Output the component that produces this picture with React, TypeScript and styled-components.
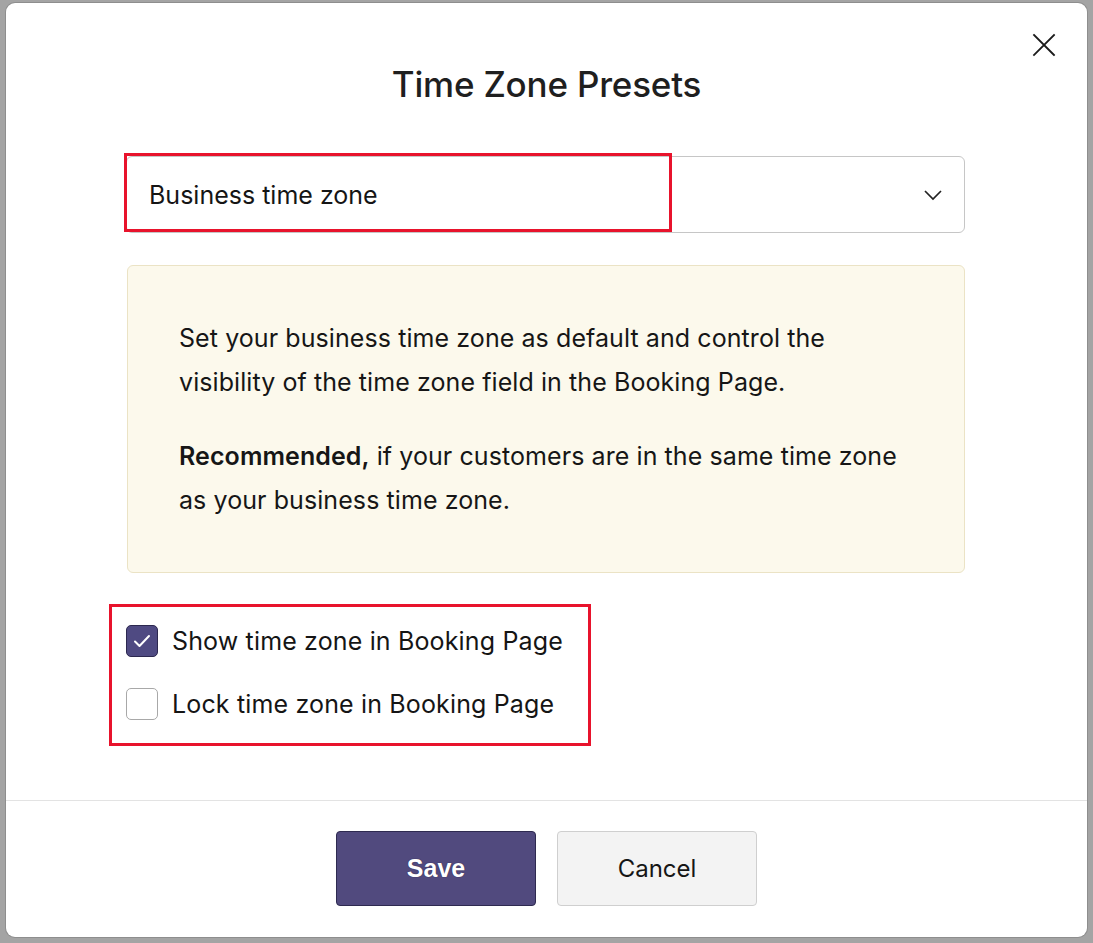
import React, { useState } from "react";
import styled, { createGlobalStyle } from "styled-components";

const Global = createGlobalStyle`
  html, body { margin: 0; padding: 0; }
  body {
    background: #a4a4a4;
    font-family: Inter, "Noto Sans", "Liberation Sans", sans-serif;
    color: #1a1a1a;
  }
  * { box-sizing: border-box; }
`;

const Backdrop = styled.div`
  width: 1093px;
  height: 943px;
  padding: 3px 6px 6px 6px;
  background: #a4a4a4;
  overflow: hidden;
`;

const Modal = styled.div`
  position: relative;
  width: 1081px;
  height: 934px;
  background: #ffffff;
  border-radius: 9px;
  display: flex;
  flex-direction: column;
  box-shadow: 0 0 0 1px #8e8e8e;
`;

const CloseButton = styled.button`
  position: absolute;
  top: 26px;
  right: 27px;
  width: 32px;
  height: 32px;
  border: none;
  background: transparent;
  padding: 0;
  display: flex;
  align-items: center;
  justify-content: center;
  cursor: pointer;
`;

const Title = styled.h1`
  margin: 61px 0 0 0;
  text-align: center;
  font-size: 35px;
  line-height: 40px;
  font-weight: 500;
  color: #1f1f1f;
  letter-spacing: -0.2px;
`;

const Body = styled.div`
  display: flex;
  flex-direction: column;
  padding: 52px 122px 0 120px;
`;

const SelectWrap = styled.div`
  position: relative;
`;

const Select = styled.div`
  height: 77px;
  border: 1px solid #c6c6c6;
  border-radius: 6px;
  display: flex;
  align-items: center;
  justify-content: space-between;
  padding: 0 22px 0 22px;
  font-size: 25px;
  color: #151515;
`;

const Highlight = styled.div<{ $left: number; $top: number; $w: number; $h: number }>`
  position: absolute;
  left: ${(p) => p.$left}px;
  top: ${(p) => p.$top}px;
  width: ${(p) => p.$w}px;
  height: ${(p) => p.$h}px;
  border: 3px solid #e8132c;
  pointer-events: none;
`;

const InfoBox = styled.div`
  margin-top: 32px;
  margin-left: 1px;
  height: 308px;
  background: #fcf9ec;
  border: 1px solid #ebe3c5;
  border-radius: 6px;
  padding: 28px 51px;
  display: flex;
  flex-direction: column;
  justify-content: center;
`;

const InfoText = styled.p`
  margin: 0;
  font-size: 25px;
  line-height: 44px;
  color: #161616;
  white-space: nowrap;
  letter-spacing: 0.08px;
  & + & { margin-top: 30px; }
  b { font-weight: 600; }
`;

const Options = styled.div`
  position: relative;
  margin-top: 52px;
  display: flex;
  flex-direction: column;
  gap: 31px;
`;

const OptionRow = styled.label`
  display: flex;
  align-items: center;
  gap: 14px;
  height: 32px;
  font-size: 25px;
  letter-spacing: 0.15px;
  color: #151515;
  cursor: pointer;
`;

const Box = styled.span<{ $checked: boolean }>`
  width: 32px;
  height: 32px;
  border-radius: 5px;
  display: flex;
  align-items: center;
  justify-content: center;
  background: ${(p) => (p.$checked ? "#4f4a82" : "#ffffff")};
  border: ${(p) => (p.$checked ? "1.5px solid #2c284f" : "1.5px solid #a8a8a8")};
  flex: none;
`;

const Spacer = styled.div`
  flex: 1;
`;

const Footer = styled.div`
  border-top: 1px solid #e3e3e3;
  padding: 30px 0 31px 0;
  display: flex;
  justify-content: center;
  gap: 21px;
`;

const Button = styled.button<{ $primary?: boolean }>`
  width: 200px;
  height: 75px;
  border-radius: 4px;
  font-size: 24px;
  cursor: pointer;
  background: ${(p) => (p.$primary ? "#514a7e" : "#f3f3f3")};
  border: 1px solid ${(p) => (p.$primary ? "#2e2a50" : "#cfcfcf")};
  color: ${(p) => (p.$primary ? "#ffffff" : "#161616")};
  font-family: ${(p) =>
    p.$primary ? '"Liberation Sans", Arial, sans-serif' : 'Inter, "Noto Sans", sans-serif'};
  font-weight: ${(p) => (p.$primary ? 700 : 400)};
  ${(p) => (p.$primary ? "font-size: 25px; text-shadow: 0 0 1px #1c1836;" : "")}
`;

const CloseIcon = () => (
  <svg width="24" height="24" viewBox="0 0 24 24" fill="none">
    <path d="M2 2 L22 22 M22 2 L2 22" stroke="#1b1b1b" strokeWidth="1.8" strokeLinecap="square" />
  </svg>
);

const Chevron = () => (
  <svg width="18" height="12" viewBox="0 0 18 12" fill="none">
    <path d="M1 2 L9 10 L17 2" stroke="#222" strokeWidth="1.7" />
  </svg>
);

const Check = () => (
  <svg width="18" height="14" viewBox="0 0 18 14" fill="none">
    <path d="M2 7.5 L6.5 12 L16 2" stroke="#ffffff" strokeWidth="2" strokeLinecap="round" strokeLinejoin="round" />
  </svg>
);

export default function App() {
  const [show, setShow] = useState(true);
  const [lock, setLock] = useState(false);
  return (
    <>
      <Global />
      <Backdrop>
        <Modal>
          <CloseButton aria-label="Close">
            <CloseIcon />
          </CloseButton>
          <Title>Time Zone Presets</Title>
          <Body>
            <SelectWrap>
              <Select>
                <span>Business time zone</span>
                <Chevron />
              </Select>
              <Highlight $left={-2} $top={-3} $w={548} $h={79} />
            </SelectWrap>
            <InfoBox>
              <InfoText>
                Set your business time zone as default and control the
                <br />
                visibility of the time zone field in the Booking Page.
              </InfoText>
              <InfoText>
                <b>Recommended,</b> if your customers are in the same time zone
                <br />
                as your business time zone.
              </InfoText>
            </InfoBox>
            <Options>
              <OptionRow onClick={() => setShow(!show)}>
                <Box $checked={show}>{show && <Check />}</Box>
                Show time zone in Booking Page
              </OptionRow>
              <OptionRow onClick={() => setLock(!lock)}>
                <Box $checked={lock}>{lock && <Check />}</Box>
                Lock time zone in Booking Page
              </OptionRow>
              <Highlight $left={-17} $top={-21} $w={482} $h={142} />
            </Options>
          </Body>
          <Spacer />
          <Footer>
            <Button $primary>Save</Button>
            <Button>Cancel</Button>
          </Footer>
        </Modal>
      </Backdrop>
    </>
  );
}
